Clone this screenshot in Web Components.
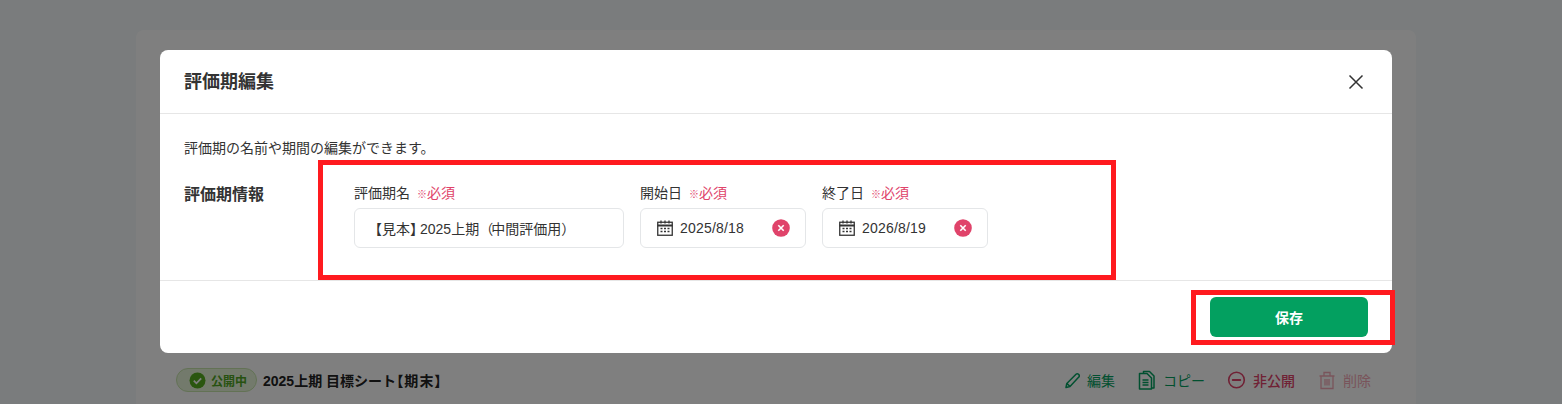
<!DOCTYPE html>
<html lang="ja">
<head>
<meta charset="utf-8">
<title>評価期編集</title>
<style>
  html, body { margin: 0; height: 404px; overflow: hidden; background: #f5f8fa; }
  body { font-family: "Liberation Sans", "Noto Sans CJK JP", sans-serif; color: #333; }
</style>
</head>
<body>
<sheet-page>
  <status-pill slot="status">公開中</status-pill>
  <span slot="title">2025上期 目標シート<span style="font-feature-settings:'palt';letter-spacing:1.200px">【期末】</span></span>
  <sheet-action slot="actions" icon="pencil" color="#03a060">編集</sheet-action>
  <sheet-action slot="actions" icon="copy" color="#03a060">コピー</sheet-action>
  <sheet-action slot="actions" icon="minus" color="#e0436a" weight="500">非公開</sheet-action>
  <sheet-action slot="actions" icon="trash" color="#f3a9b6">削除</sheet-action>
</sheet-page>
<edit-modal heading="評価期編集">
  <p>評価期の名前や期間の編集ができます。</p>
  <span slot="section">評価期情報</span>
  <form-field slot="fields" label="評価期名" width="270"><text-box>【見本<span style="letter-spacing:-4px">】</span>2025上期<span style="letter-spacing:-2px">（</span>中間評価用）</text-box></form-field>
  <form-field slot="fields" label="開始日" width="166"><date-box>2025/8/18</date-box></form-field>
  <form-field slot="fields" label="終了日" width="166"><date-box>2026/8/19</date-box></form-field>
</edit-modal>

<script>
const ICONS = {
  pencil: `<path d="M5 17.500l.8-4L15 4.300c.7-.7 1.800-.7 2.500 0l.3.3c.7.7.7 1.800 0 2.500L9 16.600z M6 13.500l3 3" fill="none" stroke="currentColor" stroke-width="1.500" stroke-linejoin="round"/>`,
  copy: `<path d="M6.500 3.500V1.500h6l4.500 4.500v12h-2.500" fill="none" stroke="currentColor" stroke-width="1.500" stroke-linejoin="round"/><path d="M2.500 3.500h7.500l4.500 4.500v11h-12z M5.500 10h6 M5.500 12.500h6 M5.500 15h6" fill="none" stroke="currentColor" stroke-width="1.500" stroke-linejoin="round"/>`,
  minus: `<circle cx="9.500" cy="10" r="7.800" fill="none" stroke="currentColor" stroke-width="1.600"/><path d="M5.700 10h7.600" stroke="currentColor" stroke-width="1.800" stroke-linecap="round"/>`,
  trash: `<path d="M4 6h12v12.500H4z M2.500 6h15 M7 6V2.500h6V6 M8 9v6.500 M10 9v6.500 M12 9v6.500" fill="none" stroke="currentColor" stroke-width="1.300"/>`
};

// background page, mostly hidden behind the modal
class SheetPage extends HTMLElement {
  connectedCallback() {
    const shadow = this.attachShadow({ mode: "open" });
    shadow.innerHTML = `
      <style>
        :host { display: block; height: 404px; padding: 30px 146px 0 136px; box-sizing: border-box; }
        .card { height: 374px; background: #fff; border-radius: 8px 8px 0 0; padding: 0 20px 0 40px; box-sizing: border-box; display: flex; flex-direction: column; justify-content: flex-end; }
        .row { display: flex; align-items: center; height: 52px; margin-bottom: -4px; padding-bottom: 4px; box-sizing: border-box; }
        .title { font-size: 14px; font-weight: 700; color: #222; margin-left: 6px; flex: 1; }
        .actions { display: flex; gap: 22px; margin-right: 25px; }
      </style>
      <div class="card">
        <div class="row">
          <slot name="status"></slot>
          <div class="title"><slot name="title"></slot></div>
          <div class="actions"><slot name="actions"></slot></div>
        </div>
      </div>`;
  }
}

class StatusPill extends HTMLElement {
  connectedCallback() {
    const shadow = this.attachShadow({ mode: "open" });
    shadow.innerHTML = `
      <style>
        :host { display: inline-flex; align-items: center; gap: 5px; height: 24px; width: 81px; box-sizing: border-box; padding-left: 12px; border-radius: 12px; background: #e6f4d9; border: 1px solid #c6e4ab; color: #4fa422; font-size: 12px; font-weight: 700; }
        svg { width: 17px; height: 17px; }
      </style>
      <svg viewBox="0 0 17 17"><circle cx="8.500" cy="8.500" r="8" fill="#55ad1e"/><path d="M4.800 8.700l2.600 2.600 4.800-5" fill="none" stroke="#fff" stroke-width="1.800"/></svg>
      <slot></slot>`;
  }
}

class SheetAction extends HTMLElement {
  connectedCallback() {
    const shadow = this.attachShadow({ mode: "open" });
    const color = this.getAttribute("color") || "#333";
    const weight = this.getAttribute("weight") || "400";
    const icon = ICONS[this.getAttribute("icon")] || "";
    shadow.innerHTML = `
      <style>
        :host { display: inline-flex; align-items: center; gap: 6px; font-size: 14px; font-weight: ${weight}; color: ${color}; }
        svg { width: 20px; height: 20px; }
      </style>
      <svg viewBox="0 0 20 20">${icon}</svg>
      <slot></slot>`;
  }
}

// dim layer, dialog box and the two red review marks lie over the page
class EditModal extends HTMLElement {
  connectedCallback() {
    const shadow = this.attachShadow({ mode: "open" });
    const heading = this.getAttribute("heading") || "";
    shadow.innerHTML = `
      <style>
        :host { display: block; position: absolute; inset: 0; background: rgba(0, 0, 0, .5); }
        .dialog { position: absolute; left: 160px; top: 50px; width: 1232px; height: 303px; background: #fff; border-radius: 8px; display: flex; flex-direction: column; }
        header { height: 64px; box-sizing: border-box; flex: none; display: flex; align-items: center; justify-content: space-between; padding: 0 28px 0 24px; border-bottom: 1px solid #e6e6e6; }
        h2 { margin: 0; font-size: 18px; font-weight: 700; color: #333; line-height: 1; }
        .close { width: 16px; height: 16px; display: block; }
        .body { height: 167px; flex: none; box-sizing: border-box; padding: 24px 24px 0; border-bottom: 1px solid #e6e6e6; }
        ::slotted(p) { margin: 0; font-size: 14px; line-height: 20px; color: #333; }
        .section { display: flex; margin-top: 24px; }
        .section-name { width: 170px; flex: none; font-size: 16px; font-weight: 700; line-height: 22px; padding-top: 2px; color: #333; }
        .fields { display: flex; gap: 16px; }
        footer { flex: 1; display: flex; justify-content: flex-end; align-items: flex-start; padding: 16px 24px 0; }
        button { width: 158px; height: 40px; border: 0; border-radius: 6px; background: #03a060; color: #fff; font: 700 14px "Liberation Sans", "Noto Sans CJK JP", sans-serif; }
        .mark { position: absolute; box-sizing: border-box; border: 5px solid #ff1a1f; }
      </style>
      <div class="dialog">
        <header>
          <h2>${heading}</h2>
          <svg class="close" viewBox="0 0 16 16"><path d="M1.500 1.500l13 13M14.500 1.500l-13 13" stroke="#333" stroke-width="1.500" fill="none"/></svg>
        </header>
        <div class="body">
          <slot></slot>
          <div class="section">
            <div class="section-name"><slot name="section"></slot></div>
            <div class="fields"><slot name="fields"></slot></div>
          </div>
        </div>
        <footer><button type="button">保存</button></footer>
      </div>
      <div class="mark" style="left:318px;top:160px;width:798px;height:120px"></div>
      <div class="mark" style="left:1191px;top:290px;width:204px;height:55px"></div>`;
  }
}

class FormField extends HTMLElement {
  connectedCallback() {
    const shadow = this.attachShadow({ mode: "open" });
    const label = this.getAttribute("label") || "";
    shadow.innerHTML = `
      <style>
        :host { display: flex; flex-direction: column; width: ${this.getAttribute("width")}px; }
        .label { display: flex; align-items: center; gap: 7px; height: 20px; font-size: 14px; color: #333; margin-bottom: 6px; }
        .req { color: #e0436a; }
        .mark { font-size: 10px; }
      </style>
      <div class="label"><span>${label}</span><span class="req"><span class="mark">※</span>必須</span></div>
      <slot></slot>`;
  }
}

class TextBox extends HTMLElement {
  connectedCallback() {
    const shadow = this.attachShadow({ mode: "open" });
    shadow.innerHTML = `
      <style>
        :host { display: flex; align-items: center; height: 40px; box-sizing: border-box; padding-left: 13px; border: 1px solid #e4e6e8; border-radius: 6px; font-size: 14px; color: #333; }
        div { white-space: nowrap; }
      </style>
      <div><slot></slot></div>`;
  }
}

class DateBox extends HTMLElement {
  connectedCallback() {
    const shadow = this.attachShadow({ mode: "open" });
    shadow.innerHTML = `
      <style>
        :host { display: flex; align-items: center; height: 40px; box-sizing: border-box; padding: 0 15px 0 16px; border: 1px solid #e4e6e8; border-radius: 6px; font-size: 14px; letter-spacing: .2px; color: #333; }
        .text { flex: 1; margin-left: 7px; }
        svg { display: block; flex: none; }
      </style>
      <svg width="16" height="16" viewBox="0 0 16 16" fill="none" stroke="#333">
        <rect x=".75" y="2.250" width="14.500" height="13" stroke-width="1.300"/>
        <path d="M.5 5.500h15" stroke-width="2"/>
        <path d="M4 .5v3M8 .5v3M12 .5v3" stroke-width="1.300"/>
        <path d="M3.500 8.500h2M7 8.500h2M10.500 8.500h2M3.500 11.500h2M7 11.500h2M10.500 11.500h2" stroke-width="1.500"/>
      </svg>
      <span class="text"><slot></slot></span>
      <svg width="18" height="18" viewBox="0 0 18 18"><circle cx="9" cy="9" r="8.800" fill="#e0436a"/><path d="M6.300 6.300l5.400 5.400M11.700 6.300l-5.400 5.400" stroke="#fff" stroke-width="1.600"/></svg>`;
  }
}

customElements.define("sheet-page", SheetPage);
customElements.define("status-pill", StatusPill);
customElements.define("sheet-action", SheetAction);
customElements.define("edit-modal", EditModal);
customElements.define("form-field", FormField);
customElements.define("text-box", TextBox);
customElements.define("date-box", DateBox);
</script>
</body>
</html>
